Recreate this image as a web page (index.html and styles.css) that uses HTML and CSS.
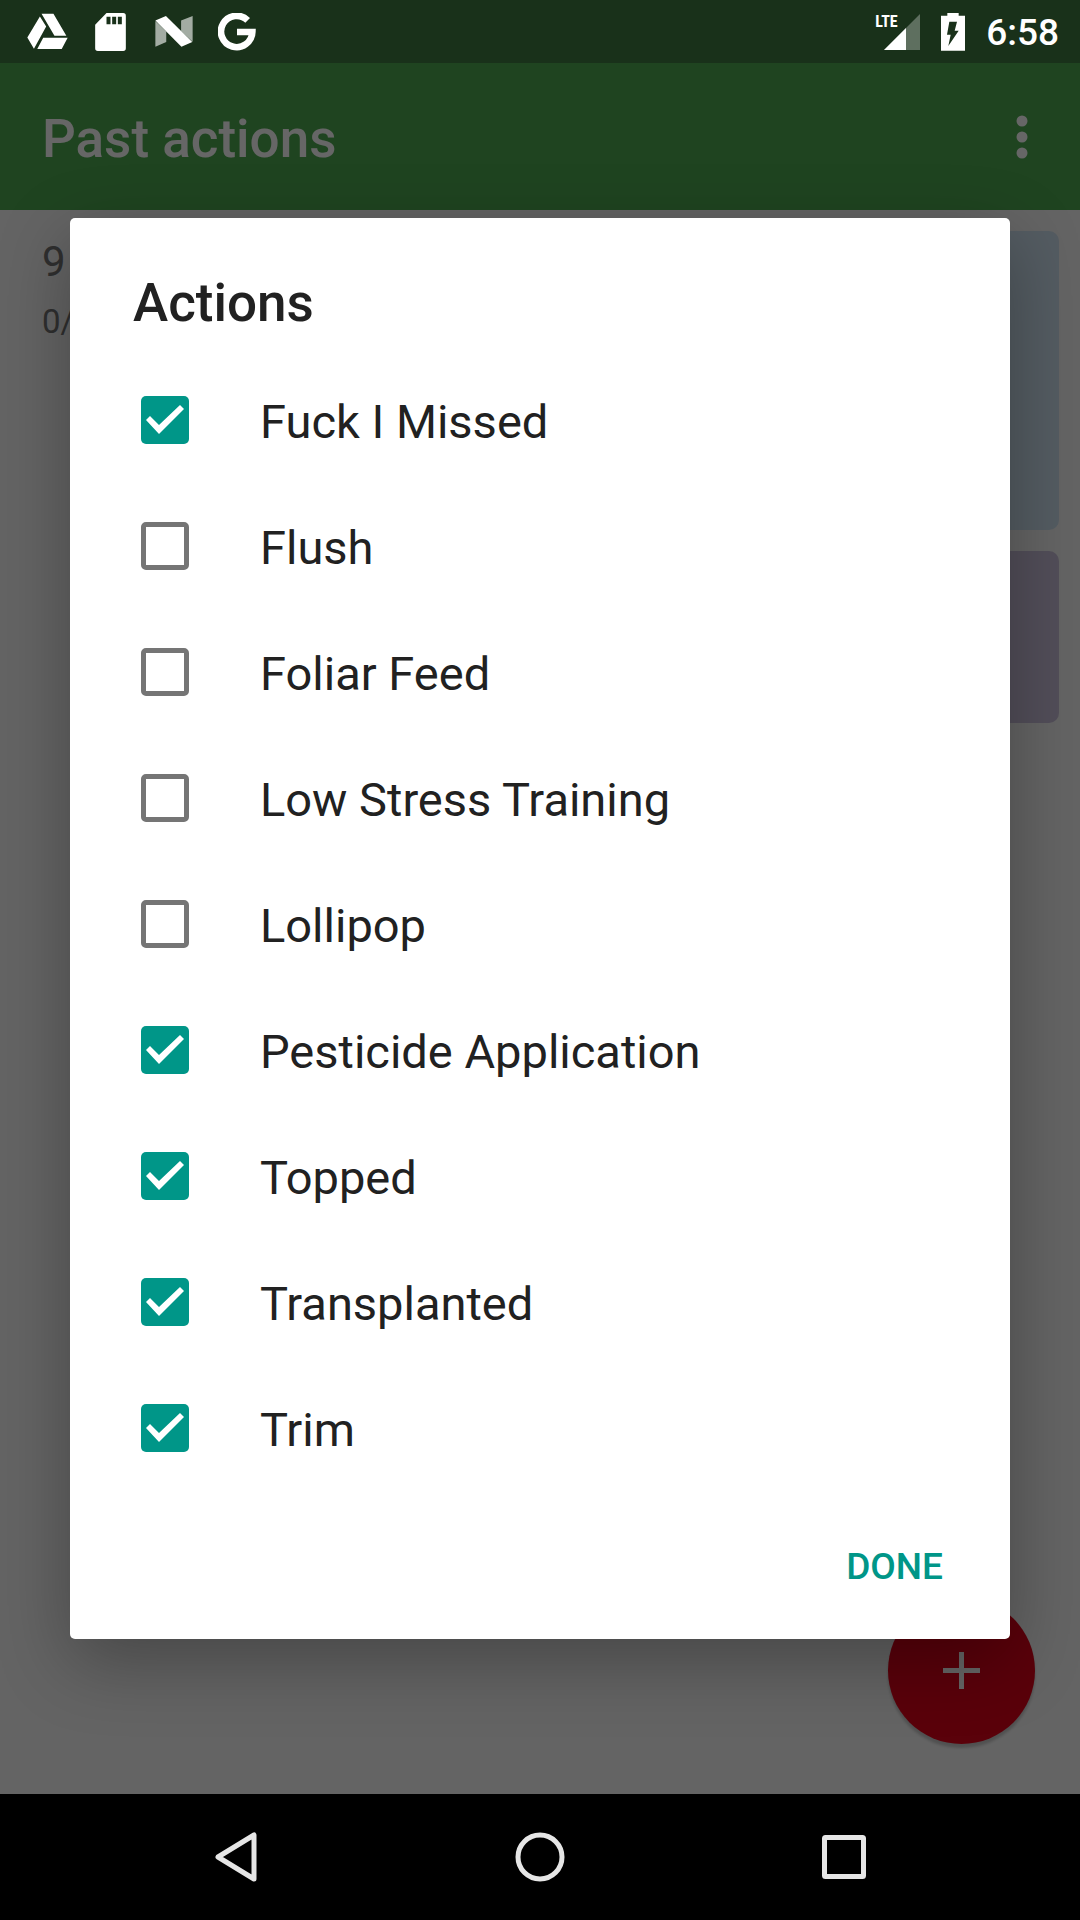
FILE: index.html
```html
<!DOCTYPE html>
<html lang="en">
<head>
  <meta charset="utf-8">
  <meta name="viewport" content="width=device-width, initial-scale=1">
  <title>Past actions</title>
  <link rel="stylesheet" href="styles.css">
</head>
<body>
  <div class="device">
    <div class="status-bar">
      <div class="notifications">
        <span class="slot">
          <svg width="41" height="37" viewBox="80 37 124 110" aria-hidden="true"><path d="M124 38h36l39 67h-36zM119 47l19 30-37 67-20-34zM129 111h74l-18 34h-74z"/></svg>
        </span>
        <span class="slot">
          <svg width="31" height="38" viewBox="286 38 92 114" aria-hidden="true"><path fill-rule="evenodd" d="M320 38h50q8 0 8 8v98q0 8-8 8h-76q-8 0-8-8V73zM320 49v23h12V49zM337 49v23h12V49zM354 49v23h12V49z"/></svg>
        </span>
        <span class="slot">
          <svg width="38" height="31" viewBox="464 48 115 94" aria-hidden="true"><path opacity=".6" d="M465 63l33 32v32l-33 14zM543 62l35-14v78l-35-32z"/><path d="M465 62l32-14 80 79-33 14z"/></svg>
        </span>
        <span class="slot">
          <svg width="38" height="38" viewBox="652 38 114 114" aria-hidden="true"><path fill="none" stroke="#fff" stroke-width="20" d="M741 60A47 47 0 1 0 755 95H709"/></svg>
        </span>
      </div>
      <div class="system">
        <span class="signal">
          <span class="network">LTE</span>
          <svg width="36" height="36" viewBox="0 0 36 36" aria-hidden="true"><path opacity=".3" d="M0 36L36 0v36z"/><path d="M0 36l22-22v22z"/></svg>
        </span>
        <svg width="24" height="38" viewBox="309 37 72 114" aria-hidden="true"><path fill-rule="evenodd" d="M309 45h19v-8h34v8h19v105h-72zM334 63l-7 39h11l-7 34 31-46h-12l7-27z"/></svg>
        <span class="clock">6:58</span>
      </div>
    </div>

    <div class="screen">
      <div class="app">
        <header class="app-bar">
          <h1 class="app-title">Past actions</h1>
          <button class="overflow" type="button" aria-label="More options">
            <svg width="12" height="44" viewBox="0 0 12 44" aria-hidden="true"><circle cx="6" cy="6" r="5.5"/><circle cx="6" cy="22" r="5.5"/><circle cx="6" cy="38" r="5.5"/></svg>
          </button>
        </header>
        <main class="timeline">
          <div class="date">
            <span class="day">9</span>
            <span class="stage">0/</span>
          </div>
          <div class="cards">
            <div class="card card-water"></div>
            <div class="card card-action"></div>
          </div>
        </main>
        <button class="fab" type="button" aria-label="Add action">
          <svg width="37" height="37" viewBox="0 0 37 37" aria-hidden="true"><path d="M0 16h16V0h5v16h16v5H21v16h-5V21H0z"/></svg>
        </button>
      </div>

      <div class="scrim">
        <form class="dialog" role="dialog" aria-labelledby="dialog-title">
          <h2 class="dialog-title" id="dialog-title">Actions</h2>
          <div class="options">
            <label class="option"><input class="check" type="checkbox" checked><span class="option-name">Fuck I Missed</span></label>
            <label class="option"><input class="check" type="checkbox"><span class="option-name">Flush</span></label>
            <label class="option"><input class="check" type="checkbox"><span class="option-name">Foliar Feed</span></label>
            <label class="option"><input class="check" type="checkbox"><span class="option-name">Low Stress Training</span></label>
            <label class="option"><input class="check" type="checkbox"><span class="option-name">Lollipop</span></label>
            <label class="option"><input class="check" type="checkbox" checked><span class="option-name">Pesticide Application</span></label>
            <label class="option"><input class="check" type="checkbox" checked><span class="option-name">Topped</span></label>
            <label class="option"><input class="check" type="checkbox" checked><span class="option-name">Transplanted</span></label>
            <label class="option"><input class="check" type="checkbox" checked><span class="option-name">Trim</span></label>
          </div>
          <div class="dialog-actions">
            <button class="done" type="button">DONE</button>
          </div>
        </form>
      </div>
    </div>

    <nav class="nav-bar">
      <button class="nav-button" type="button" aria-label="Back">
        <svg width="50" height="50" viewBox="0 0 50 50" aria-hidden="true"><path d="M43 3v44L7 25z"/></svg>
      </button>
      <button class="nav-button" type="button" aria-label="Home">
        <svg width="50" height="50" viewBox="0 0 50 50" aria-hidden="true"><circle cx="25" cy="25" r="22"/></svg>
      </button>
      <button class="nav-button" type="button" aria-label="Recent apps">
        <svg width="50" height="50" viewBox="0 0 50 50" aria-hidden="true"><rect x="5.500" y="5.500" width="39" height="39" rx="1"/></svg>
      </button>
    </nav>
  </div>
</body>
</html>
```
FILE: styles.css
```css
* {
  box-sizing: border-box;
}

body {
  margin: 0;
  font-family: Roboto, "Noto Sans", sans-serif;
  background: #000;
}

button {
  margin: 0;
  padding: 0;
  border: 0;
  background: none;
  font-family: inherit;
  cursor: pointer;
}

svg {
  display: block;
}

.device {
  display: grid;
  grid-template-rows: auto 1fr auto;
  min-height: 100vh;
}

/* Status bar */
.status-bar {
  display: flex;
  align-items: center;
  justify-content: space-between;
  height: 63px;
  padding: 0 21px 0 16px;
  background: #19311a;
  color: #fff;
  fill: #fff;
}

.notifications,
.system {
  display: flex;
  align-items: center;
}

.slot {
  display: flex;
  justify-content: center;
  width: 63px;
}

.system {
  gap: 21px;
}

.signal {
  position: relative;
  padding-left: 9px;
}

.network {
  position: absolute;
  top: 0;
  left: 0;
  font: bold 16px/16px "Liberation Sans Narrow", "Roboto Condensed", Roboto, sans-serif;
}

.clock {
  padding-top: 3px;
  font-size: 37px;
  font-weight: 500;
  line-height: 44px;
}

/* App screen and dialog share one grid cell */
.screen {
  display: grid;
  overflow: hidden;
}

.app,
.scrim {
  grid-area: 1 / 1;
}

.app {
  position: relative;
  background: #fafafa;
}

.app-bar {
  display: flex;
  align-items: center;
  justify-content: space-between;
  height: 147px;
  padding: 0 42px;
  background: #4eaa50;
  color: #fff;
}

.app-title {
  margin: 0;
  padding-top: 4px;
  font-size: 53px;
  font-weight: 500;
  line-height: 62px;
}

.overflow {
  display: flex;
  justify-content: center;
  width: 32px;
  fill: #fff;
}

.timeline {
  display: grid;
  grid-template-columns: 1fr 3fr;
  padding: 21px 21px 21px 42px;
}

.date {
  display: flex;
  flex-direction: column;
  gap: 15px;
  padding-top: 6px;
  color: #757575;
}

.day {
  font-size: 42px;
  line-height: 50px;
}

.stage {
  font-size: 33px;
  line-height: 40px;
}

.cards {
  display: flex;
  flex-direction: column;
  gap: 21px;
}

.card {
  border-radius: 10px;
}

.card-water {
  height: 299px;
  background: #d2e6f5;
}

.card-action {
  height: 172px;
  background: #cdc3de;
}

.fab {
  position: absolute;
  right: 45px;
  bottom: 50px;
  display: grid;
  place-items: center;
  width: 147px;
  height: 147px;
  border-radius: 50%;
  background: #e2041b;
  fill: #fff;
  box-shadow: 0 4px 3px rgba(0, 0, 0, 0.2);
}

.scrim {
  position: relative;
  display: flex;
  align-items: center;
  padding: 0 70px;
  background: rgba(0, 0, 0, 0.6);
}

/* Dialog */
.dialog {
  flex: 1;
  padding-top: 54px;
  border-radius: 5px;
  background: #fff;
  color: #212121;
  box-shadow: 0 22px 72px rgba(0, 0, 0, 0.3);
}

.dialog-title {
  margin: 0 63px 23px;
  font-size: 53px;
  font-weight: 500;
  line-height: 62px;
}

.option {
  display: flex;
  align-items: center;
  gap: 71px;
  height: 126px;
  padding: 0 71px;
}

.option-name {
  padding-top: 4px;
  font-size: 47px;
  line-height: 56px;
}

.check {
  appearance: none;
  flex: none;
  width: 48px;
  height: 48px;
  margin: 0;
  border: 5px solid #757575;
  border-radius: 5px;
}

.check:checked {
  border: 0;
  background: #009688;
}

.check:checked::before {
  content: "";
  display: block;
  width: 48px;
  height: 48px;
  background: #fff;
  clip-path: polygon(5px 24px, 9px 20px, 18px 29px, 39px 9px, 43px 13px, 18px 38px);
}

.dialog-actions {
  display: flex;
  justify-content: flex-end;
  padding: 28px 45px 26px;
}

.done {
  height: 94px;
  padding: 2px 22px 0;
  color: #009688;
  font-size: 37px;
  font-weight: 500;
  line-height: 44px;
}

/* Navigation bar */
.nav-bar {
  display: flex;
  justify-content: center;
  height: 126px;
  background: #000;
}

.nav-button {
  display: grid;
  place-items: center;
  width: 304px;
}

.nav-button svg {
  fill: none;
  stroke: #e6e6e6;
  stroke-width: 5;
  stroke-linejoin: round;
}
```
